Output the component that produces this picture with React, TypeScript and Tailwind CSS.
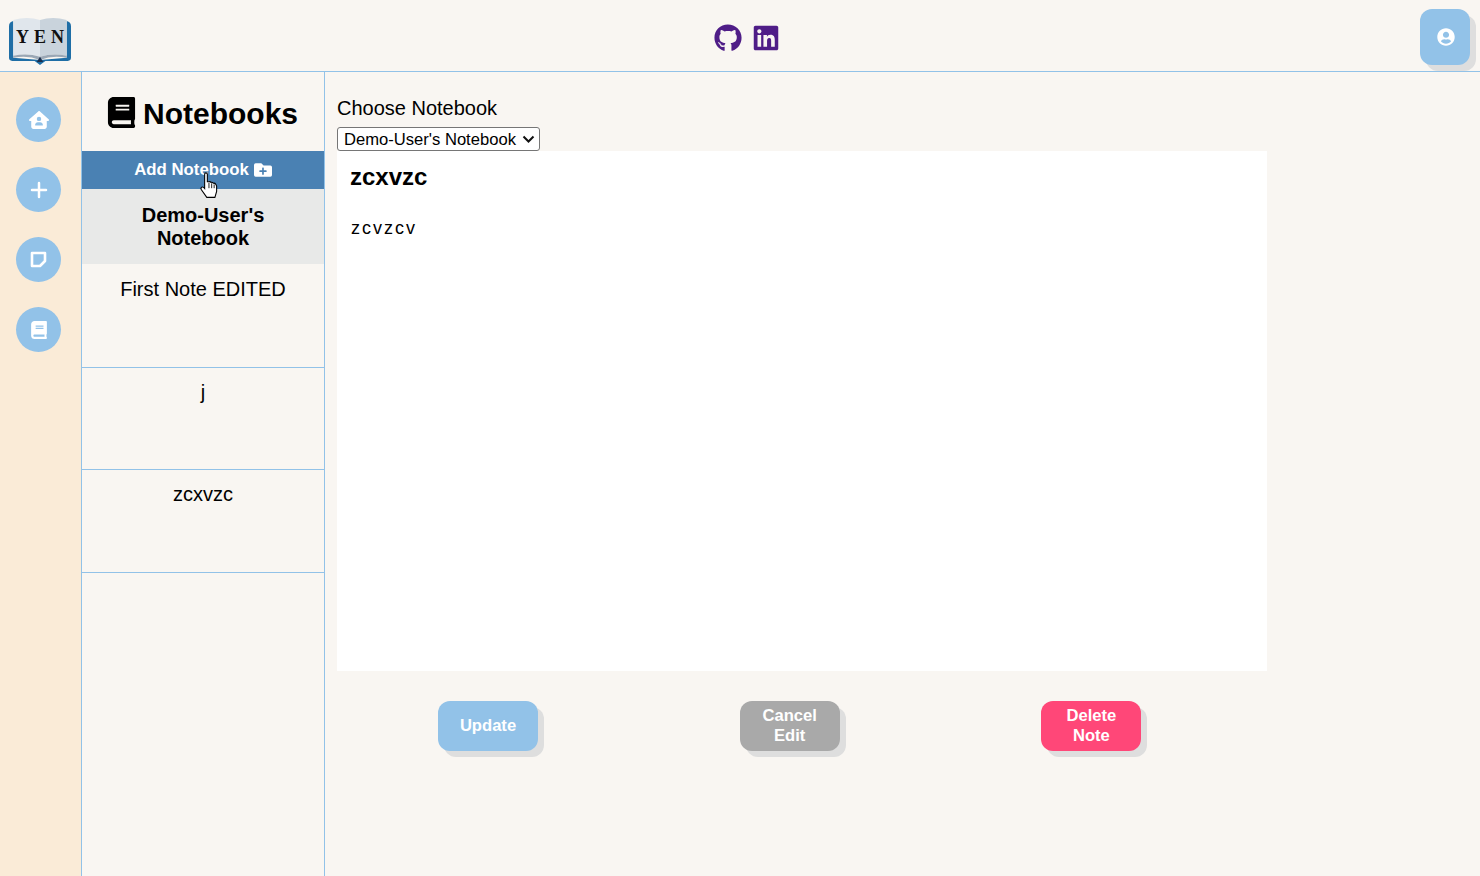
import React from 'react';
import { FaBook, FaFolderPlus, FaGithub, FaLinkedin, FaUserCircle } from 'react-icons/fa';
import { FaHouseUser } from 'react-icons/fa6';
import { Plus } from 'lucide-react';

const SideButton = ({ children }: { children: React.ReactNode }) => (
    <button className="w-[45px] h-[45px] rounded-full bg-[#92c2e8] text-white flex items-center justify-center">
        {children}
    </button>
);

const NoteRow = ({ title, className }: { title: string; className: string }) => (
    <div className={`border-b border-[#92c2e8] text-center ${className}`}>{title}</div>
);

const ActionButton = ({ label, className }: { label: React.ReactNode; className: string }) => (
    <button className={`w-[100px] h-[50px] rounded-[12px] text-white font-bold text-[16.6px] leading-[20px] shadow-[6px_6px_0_#dedede] ${className}`}>
        {label}
    </button>
);

const Logo = () => (
    <svg width="62" height="47" viewBox="3 1 58 46" preserveAspectRatio="none">
        <path d="M3 9 Q3 5 7 4 L7 40 L32 42 L57 40 L57 4 Q61 5 61 9 L61 40 Q61 43 58 43 L37 43 L32 47 L27 43 L6 43 Q3 43 3 40 Z" fill="#1f6ea6" />
        <path d="M7 3 Q20 -1 32 3 L32 39 Q20 35 7 38 Z" fill="#e0e6ec" />
        <path d="M32 3 Q44 -1 57 3 L57 38 Q44 35 32 39 Z" fill="#c9d3dc" />
        <path d="M7 38 Q20 35 32 39 Q44 35 57 38 L57 40 Q44 37 32 42 Q20 37 7 40 Z" fill="#9aa7b5" />
        <path d="M29 44 L32 39 L35 44 Z" fill="#1c2f4d" />
    </svg>
);

const StickyNote = () => (
    <svg width="17" height="17" viewBox="0 0 17 17" fill="none" stroke="currentColor" strokeWidth="2.6" strokeLinejoin="round">
        <path d="M2 2 L15 2 L15 10 L10 15 L2 15 Z" />
    </svg>
);

const HandCursor = () => (
    <svg className="absolute left-[117px] top-[21px]" width="21" height="27" viewBox="0 0 18 25">
        <path d="M4.5 2 Q4.5 0.8 5.7 0.8 Q7 0.8 7 2 L7 9 L8.6 9 Q9.8 8.6 10.4 9.6 Q11.8 9.2 12.5 10.4 Q14 10 14.8 11.4 L15.6 13 L15.6 18 L14 23.5 L6.5 23.5 L1.5 16.5 Q0.5 14.8 1.8 14 Q3 13.4 4.5 15.2 Z" fill="#fff" stroke="#000" strokeWidth="1" />
        <path d="M8.5 10 L8.5 15 M11 10.5 L11 15 M13.3 11.5 L13.3 15" stroke="#000" strokeWidth="0.8" />
    </svg>
);

const App = () => {
    return (
        <div className="w-[1480px] h-[876px] overflow-hidden flex flex-col bg-[#f9f6f2] text-black font-['Liberation_Sans',Arial,sans-serif]">
            <header className="h-[72px] shrink-0 border-b border-[#92c2e8] flex items-center relative">
                <div className="w-[81px] pl-[9px] pt-[12px]">
                    <div className="relative w-[62px] h-[47px]">
                        <Logo />
                        <div className="absolute inset-x-0 top-[9px] flex justify-center gap-[5px] font-['Liberation_Serif',serif] font-bold text-[18px] leading-[20px] text-[#111]">
                            <span>Y</span>
                            <span>E</span>
                            <span>N</span>
                        </div>
                    </div>
                </div>
                <div className="flex-1 flex items-center justify-center gap-[10px] pr-[7px] text-[#4f1d87] pt-[5px]">
                    <FaGithub size={28} />
                    <FaLinkedin size={28} />
                </div>
                <div className="pr-[10px] pt-[3px]">
                    <button className="w-[50px] h-[56px] pl-[2px] rounded-[12px] bg-[#92c2e8] text-white flex items-center justify-center shadow-[6px_6px_0_#dedede]">
                        <FaUserCircle size={18} />
                    </button>
                </div>
            </header>

            <div className="flex-1 flex min-h-0">
                <aside className="w-[82px] shrink-0 bg-[#faebd7] border-r border-[#92c2e8] flex flex-col items-start pl-[16px] pt-[25px] gap-[25px]">
                    <SideButton><FaHouseUser size={20} /></SideButton>
                    <SideButton><Plus size={24} strokeWidth={2.5} /></SideButton>
                    <SideButton><StickyNote /></SideButton>
                    <SideButton><FaBook size={18} /></SideButton>
                </aside>

                <section className="w-[243px] shrink-0 border-r border-[#92c2e8]">
                    <div className="h-[79px] flex items-center justify-center gap-[6px] text-[30px] font-bold pt-[2px] pr-[2px]">
                        <FaBook size={31} />
                        <span className="mt-[2px]">Notebooks</span>
                    </div>
                    <div className="relative h-[38px] bg-[#4a81b3] text-white font-bold text-[16.8px] flex items-center justify-center gap-[5px]">
                        <span>Add Notebook</span>
                        <FaFolderPlus size={18} />
                        <HandCursor />
                    </div>
                    <div className="h-[75px] bg-[#e8e9e8] flex items-center justify-center text-center font-bold text-[20px] leading-[23px] px-[40px]">
                        Demo-User's Notebook
                    </div>
                    <NoteRow title="First Note EDITED" className="h-[104px] pt-[14px] text-[20px] leading-[23px]" />
                    <NoteRow title="j" className="h-[102px] pt-[13px] text-[20px] leading-[23px]" />
                    <NoteRow title="zcxvzc" className="h-[103px] pt-[13px] text-[20px] leading-[23px]" />
                </section>

                <main className="flex-1 pl-[12px] pt-[24px]">
                    <div className="text-[20px] leading-[24px] mb-[7px]">Choose Notebook</div>
                    <div className="relative w-[203px] h-[24px]">
                        <select className="block w-full h-full appearance-none bg-white border border-[#767676] rounded-[3px] text-[16.6px] pl-[6px]" defaultValue="demo">
                            <option value="demo">Demo-User's Notebook</option>
                        </select>
                        <svg className="absolute right-[5px] top-[8px] pointer-events-none" width="13" height="8" viewBox="0 0 13 8" fill="none" stroke="#111" strokeWidth="2">
                            <path d="M1.5 1.5 L6.5 6.5 L11.5 1.5" />
                        </svg>
                    </div>
                    <div className="w-[930px] h-[520px] bg-white px-[13px] pt-[14px]">
                        <div className="font-bold text-[24px] leading-[24px]">zcxvzc</div>
                        <div className="mt-[29px] text-[18px] leading-[20px] tracking-[2px] pl-[1px]">zcvzcv</div>
                    </div>
                    <div className="w-[703.4px] ml-[101px] flex justify-between mt-[30px]">
                        <ActionButton label="Update" className="bg-[#92c2e8]" />
                        <ActionButton label={<>Cancel<br />Edit</>} className="bg-[#a9a9a9]" />
                        <ActionButton label={<>Delete<br />Note</>} className="bg-[#ff4778]" />
                    </div>
                </main>
            </div>
        </div>
    );
};

export default App;
